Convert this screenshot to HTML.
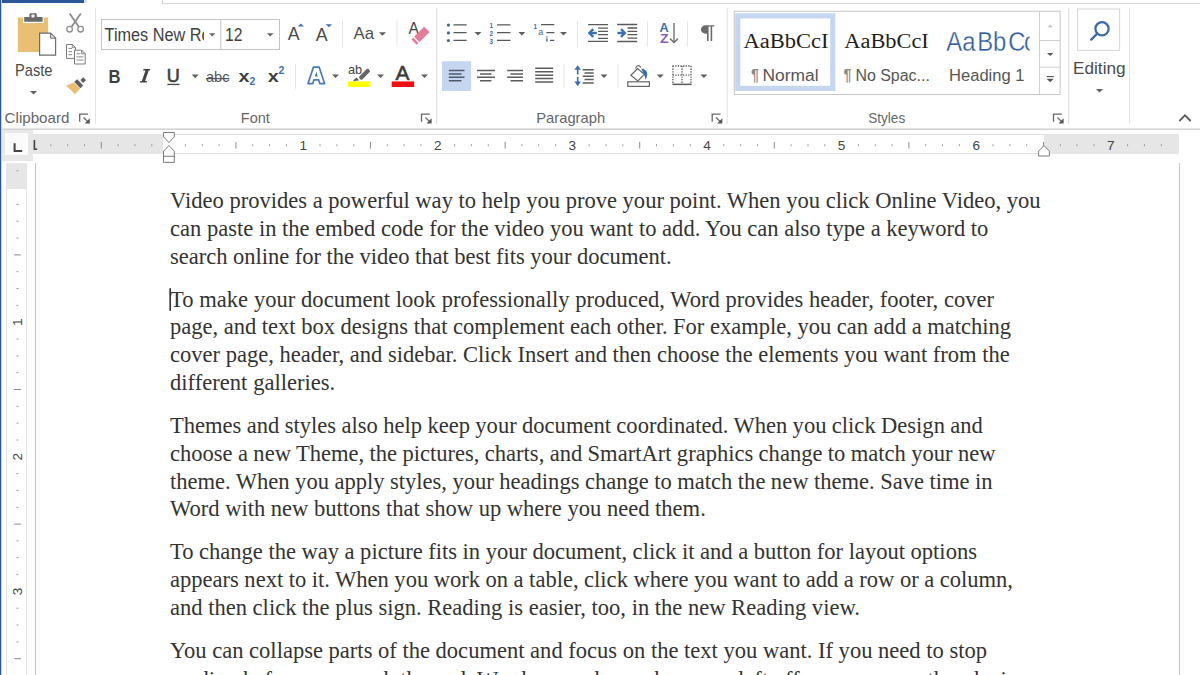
<!DOCTYPE html>
<html><head><meta charset="utf-8">
<style>
*{margin:0;padding:0;box-sizing:border-box}
html,body{width:1200px;height:675px;overflow:hidden;background:#fff}
body{position:relative;font-family:"Liberation Sans",sans-serif;color:#444}
.a{position:absolute}
.ln{position:absolute;left:170px;font-family:"Liberation Serif",serif;font-size:22.55px;color:#333;white-space:pre;line-height:1}
svg{position:absolute;left:0;top:0}
</style></head><body>
<!-- top tab strip remnants -->
<div class="a" style="left:0;top:0;width:84px;height:3px;background:#2b579a"></div>
<div class="a" style="left:84px;top:0;width:3px;height:3px;background:#dde3ea"></div>
<div class="a" style="left:162px;top:0;width:1px;height:4px;background:#d4d4d4"></div>
<div class="a" style="left:162px;top:3px;width:1038px;height:1px;background:#d4d4d4"></div>
<!-- ribbon bottom border -->
<div class="a" style="left:0;top:128px;width:1200px;height:1px;background:#e6e6e6"></div>
<div class="a" style="left:0;top:129px;width:1200px;height:1px;background:#d2d2d2"></div>
<!-- ruler -->
<div class="a" style="left:2px;top:130px;width:31px;height:31px;background:#e8e8e8"></div>
<div class="a" style="left:5px;top:133px;width:23px;height:22px;background:#fbfbfb"></div>
<div class="a" style="left:33px;top:134px;width:1146px;height:20px;background:#e6e6e6"></div>
<div class="a" style="left:163px;top:134px;width:881px;height:20px;background:#fff;border-top:1px solid #e0e0e0;border-bottom:1px solid #e0e0e0"></div>
<!-- vertical ruler -->
<div class="a" style="left:6px;top:163px;width:21px;height:512px;background:#fff;border-left:1px solid #e3e3e3;border-right:1px solid #e3e3e3"></div>
<div class="a" style="left:6px;top:163px;width:21px;height:26px;background:#e6e6e6"></div>
<!-- page edges -->
<div class="a" style="left:35px;top:163px;width:1px;height:512px;background:#c6c6c6"></div>
<div class="a" style="left:1179px;top:163px;width:1px;height:512px;background:#c6c6c6"></div>
<!-- left blue border -->
<div class="a" style="left:0;top:0;width:1px;height:675px;background:#2b579a"></div>
<div class="a" style="left:1px;top:0;width:1px;height:675px;background:#c5d2e6"></div>
<svg width="1200" height="130" viewBox="0 0 1200 130" style="font-family:'Liberation Sans',sans-serif">

<!-- group separators -->
<g fill="#e3e3e3">
 <rect x="95" y="8" width="1" height="116"/>
 <rect x="436" y="8" width="1.2" height="116"/>
 <rect x="726.5" y="8" width="1.2" height="116"/>
 <rect x="1068" y="8" width="1.2" height="116"/>
 <rect x="1129" y="8" width="1.2" height="116"/>
</g>
<!-- inner separators -->
<g fill="#e6e6e6">
 <rect x="295" y="64" width="1" height="25"/>
 <rect x="342" y="20" width="1" height="27"/>
 <rect x="396.5" y="20" width="1" height="27"/>
 <rect x="577" y="21" width="1" height="26"/>
 <rect x="647" y="21" width="1" height="26"/>
 <rect x="687" y="21" width="1" height="26"/>
 <rect x="563.5" y="64" width="1" height="24"/>
 <rect x="617.5" y="64" width="1" height="24"/>
</g>
<!-- group labels -->
<g fill="#666" font-size="14.2">
 <text x="4.6" y="122.5" textLength="64.8" lengthAdjust="spacingAndGlyphs">Clipboard</text>
 <text x="240.8" y="122.8" textLength="29" lengthAdjust="spacingAndGlyphs">Font</text>
 <text x="536.3" y="122.5" textLength="68.8" lengthAdjust="spacingAndGlyphs">Paragraph</text>
 <text x="868.2" y="122.8" textLength="37" lengthAdjust="spacingAndGlyphs">Styles</text>
</g>
<g transform="translate(79,113.5)"><path d="M0.7,8.2V0.6H9" fill="none" stroke="#666" stroke-width="1.3"/><path d="M4.6,4 L9,8.4" stroke="#666" stroke-width="1.3"/><path d="M10.8,4.8V9.9H5.7z" fill="#555"/></g>
<g transform="translate(420.8,113.5)"><path d="M0.7,8.2V0.6H9" fill="none" stroke="#666" stroke-width="1.3"/><path d="M4.6,4 L9,8.4" stroke="#666" stroke-width="1.3"/><path d="M10.8,4.8V9.9H5.7z" fill="#555"/></g>
<g transform="translate(711.5,113.5)"><path d="M0.7,8.2V0.6H9" fill="none" stroke="#666" stroke-width="1.3"/><path d="M4.6,4 L9,8.4" stroke="#666" stroke-width="1.3"/><path d="M10.8,4.8V9.9H5.7z" fill="#555"/></g>
<g transform="translate(1052.8,113.5)"><path d="M0.7,8.2V0.6H9" fill="none" stroke="#666" stroke-width="1.3"/><path d="M4.6,4 L9,8.4" stroke="#666" stroke-width="1.3"/><path d="M10.8,4.8V9.9H5.7z" fill="#555"/></g>

<!-- ===== Clipboard ===== -->
<rect x="17.8" y="17.5" width="30.3" height="34.5" fill="#e9bf73"/>
<rect x="23" y="16" width="20.6" height="7" fill="#fff"/>
<path d="M24.2,16.9H29.4V14.4Q29.4,13.2 30.6,13.2H35.6Q36.8,13.2 36.8,14.4V16.9H42.6V21.7H24.2z" fill="#6a6a6a"/>
<rect x="31.4" y="14.6" width="3.2" height="2.8" rx="0.6" fill="#f4f4f4"/>
<path d="M39.6,33.2H50.6L55.6,38.2V55.2H39.6z" fill="#fff" stroke="#6d6d6d" stroke-width="1.2"/>
<path d="M50.6,33.2V38.2H55.6Z" fill="#e6e6e6" stroke="#6d6d6d" stroke-width="1"/>
<text x="15" y="75.6" font-size="16.4" fill="#4a4a4a" textLength="37.5" lengthAdjust="spacingAndGlyphs">Paste</text>
<path transform="translate(30,91)" d="M0,0h7l-3.5,3.6z" fill="#5f5f5f"/>
<!-- scissors -->
<g stroke="#8c8c8c" fill="none">
 <path d="M69.6,13.4 L78.6,26.6" stroke-width="1.8"/>
 <path d="M80.8,13.4 L71.8,26.6" stroke-width="1.8"/>
 <circle cx="69.6" cy="29.2" r="2.8" stroke-width="1.3"/>
 <circle cx="80.6" cy="29.2" r="2.8" stroke-width="1.3"/>
</g>
<!-- copy -->
<g stroke="#7a7a7a" stroke-width="1" fill="#fff">
 <path d="M66.5,44.5H72.3L75.5,47.7V58.4H66.5z"/>
 <path d="M74.5,50.2H81.6L85.2,53.8V64H74.5z"/>
</g>
<g fill="#e8e8e8" stroke="#7a7a7a" stroke-width="0.8"><path d="M72.3,44.5V47.7H75.5Z"/><path d="M81.6,50.2V53.8H85.2Z"/></g>
<g stroke="#8a8a8a" stroke-width="1">
 <path d="M68.4,48.4h3.6 M68.4,51.6h3.6 M68.4,54.7h3.6"/>
 <path d="M76.6,53.8h4 M76.6,56.9h6.8 M76.6,60h6.8"/>
</g>
<!-- format painter -->
<path d="M66.2,85.6 L74,82.4 L80.2,88.6 L75,94.2 Z" fill="#e9bf73"/>
<path d="M74.2,81.8 L77.2,79.3 L83.2,85.5 L80.4,88.2 Z" fill="#5f5f5f"/>
<path d="M80.4,80 L83.4,77.3 L86,80.2 L83,82.9 Z" fill="#5f5f5f"/>

<!-- ===== Font ===== -->
<rect x="101.5" y="19.5" width="178" height="30" fill="#fff" stroke="#c3c3c3" stroke-width="1"/>
<rect x="220.3" y="19.5" width="1" height="30" fill="#c3c3c3"/>
<svg x="102" y="20" width="102" height="29" overflow="hidden"><text x="2.6" y="20.8" font-size="17.6" fill="#3f3f3f" textLength="106" lengthAdjust="spacingAndGlyphs">Times New Ro</text></svg>
<path d="M209,33.3h6.4l-3.2,3.2z" fill="#666"/>
<text x="225" y="40.8" font-size="17.6" fill="#3f3f3f" textLength="17.5" lengthAdjust="spacingAndGlyphs">12</text>
<path d="M266.8,33.3h6.8l-3.4,3.3z" fill="#666"/>
<!-- grow/shrink -->
<text x="287.8" y="39.8" font-size="17.8" fill="#4a4a4a">A</text>
<path d="M297.8,26.4L300.8,23.4L303.9,26.4z" fill="#3a6fb0"/>
<text x="315.8" y="40.7" font-size="17.8" fill="#4a4a4a">A</text>
<path d="M325.8,24.2H332L328.9,27.3z" fill="#3a6fb0"/>
<!-- change case -->
<text x="353.6" y="38.6" font-size="17" fill="#4e4e4e" textLength="20.5" lengthAdjust="spacingAndGlyphs">Aa</text>
<path transform="translate(379,32.2)" d="M0,0h7l-3.5,3.6z" fill="#5f5f5f"/>
<!-- clear formatting -->
<text x="408.6" y="34.4" font-size="15.6" fill="#444">A</text>
<g transform="translate(420.4,35.8) rotate(-45)">
 <rect x="-9" y="-3.8" width="18" height="7.6" rx="0.8" fill="#e57c99"/>
 <rect x="-6.4" y="-4" width="1.3" height="8" fill="#fff"/>
</g>
<!-- font row 2 -->
<text x="108.6" y="82.5" font-size="18.6" font-weight="bold" fill="#3e3e3e" textLength="12" lengthAdjust="spacingAndGlyphs">B</text>
<path d="M143.5,69H150.2L149.8,70.5H143.1Z M145.6,70.3H148.8L145,81.3H141.8Z M140.3,81H147L146.6,82.6H139.9Z" fill="#444"/>
<text x="166.8" y="82" font-size="17.6" fill="#404040" stroke="#404040" stroke-width="0.6" textLength="13" lengthAdjust="spacingAndGlyphs">U</text>
<rect x="167.4" y="83.8" width="12" height="1.3" fill="#444"/>
<path transform="translate(191.7,74.6)" d="M0,0h7l-3.5,3.6z" fill="#5f5f5f"/>
<text x="206" y="82.3" font-size="15" fill="#555" textLength="23.5" lengthAdjust="spacingAndGlyphs">abc</text>
<rect x="206" y="78" width="23.4" height="1.2" fill="#555"/>
<text x="238.5" y="82.3" font-size="15.6" font-weight="bold" fill="#3e3e3e" textLength="11" lengthAdjust="spacingAndGlyphs">x</text>
<text x="249.4" y="84.8" font-size="10" font-weight="bold" fill="#3a6fb0" textLength="5.8" lengthAdjust="spacingAndGlyphs">2</text>
<text x="267.8" y="82.3" font-size="15.6" font-weight="bold" fill="#3e3e3e" textLength="11" lengthAdjust="spacingAndGlyphs">x</text>
<text x="278.4" y="73.5" font-size="10" font-weight="bold" fill="#3a6fb0" textLength="5.8" lengthAdjust="spacingAndGlyphs">2</text>
<!-- text effects -->
<path d="M313.4,67.2H319.2L324.6,83.6H319.8L318.6,79.8H314L312.8,83.6H308Z" fill="#fff" stroke="#4a7ab8" stroke-width="1.7" stroke-linejoin="round"/>
<path d="M314.9,76.6 L316.3,71.4 L317.7,76.6Z" fill="#3a6fb0"/>
<path transform="translate(332,74.4)" d="M0,0h7l-3.5,3.6z" fill="#5f5f5f"/>
<!-- highlight -->
<text x="348" y="73.7" font-size="12.6" fill="#444" textLength="14.2" lengthAdjust="spacingAndGlyphs">ab</text>
<rect x="357.2" y="72" width="14.6" height="4.6" rx="1.8" transform="rotate(-45 364.5 74.3)" fill="#fff"/>
<rect x="358" y="72.1" width="13" height="4.2" rx="1.6" transform="rotate(-45 364.5 74.2)" fill="#666"/>
<path d="M352.8,81.2 L356.2,77.4 L359.2,80.2 Z" fill="#555"/>
<rect x="347.8" y="81.4" width="22.5" height="5.6" fill="#ffff00"/>
<path transform="translate(377,74.4)" d="M0,0h7l-3.5,3.6z" fill="#5f5f5f"/>
<!-- font color -->
<text x="395.6" y="79.8" font-size="19.6" fill="#3b3b3b" stroke="#3b3b3b" stroke-width="0.5" textLength="14" lengthAdjust="spacingAndGlyphs">A</text>
<rect x="391.7" y="81.4" width="22.5" height="5.6" fill="#ee1111"/>
<path transform="translate(421,74.4)" d="M0,0h7l-3.5,3.6z" fill="#5f5f5f"/>

<!-- ===== Paragraph row 1 ===== -->
<g fill="#41699f">
 <circle cx="448.4" cy="25.1" r="1.6"/><circle cx="448.4" cy="32.9" r="1.6"/><circle cx="448.4" cy="40.5" r="1.6"/>
</g>
<g stroke="#585858" stroke-width="1.4">
 <path d="M453.5,24.9H466.6 M453.5,32.6H466.6 M453.5,40.4H466.6"/>
 <path d="M497,24.9H510.5 M497,32.6H510.5 M497,40.4H510.5"/>
 <path d="M541.1,24.6H554.3 M546.4,32.6H554.3 M550,40.4H554.3"/>
</g>
<path transform="translate(474.5,32)" d="M0,0h7l-3.5,3.6z" fill="#5f5f5f"/>
<g fill="#41699f" font-size="6.4" font-weight="bold">
 <text x="489.6" y="28.4">1</text><text x="489.6" y="36">2</text><text x="489.6" y="43.6">3</text>
 <text x="533.6" y="28.6">1</text>
</g>
<text x="538.2" y="35.4" font-size="9" fill="#41699f">a</text>
<rect x="546.2" y="36.3" width="1.4" height="1.2" fill="#41699f"/><rect x="546.2" y="38.4" width="1.4" height="3.2" fill="#41699f"/>
<path transform="translate(518.4,32)" d="M0,0h7l-3.5,3.6z" fill="#5f5f5f"/>
<path transform="translate(560,32)" d="M0,0h7l-3.5,3.6z" fill="#5f5f5f"/>
<!-- decrease/increase indent -->
<g stroke="#5a5a5a" stroke-width="1.3">
 <path d="M588,24.6H608 M598.1,28.1H608 M598.1,31.4H608 M598.1,34.7H608 M598.1,38.3H608 M588,41.4H608"/>
 <path d="M617.2,24.5H637.2 M627.5,28H637.2 M627.5,31.3H637.2 M627.5,34.7H637.2 M627.5,38.2H637.2 M617.2,41.5H637.2"/>
</g>
<g stroke="#3a6fb0" stroke-width="2.4" fill="none" stroke-linecap="butt">
 <path d="M596.8,33H589.8"/><path d="M593.2,29.2 L589.4,33 L593.2,36.8"/>
 <path d="M617.4,33H624.6"/><path d="M621,29.2 L624.8,33 L621,36.8"/>
</g>
<!-- sort -->
<text x="659.6" y="32" font-size="12" font-weight="bold" fill="#3a6fb0" textLength="9.2" lengthAdjust="spacingAndGlyphs">A</text>
<text x="660" y="42.6" font-size="12" font-weight="bold" fill="#8a5cb8" textLength="8.6" lengthAdjust="spacingAndGlyphs">Z</text>
<g stroke="#666" stroke-width="1.3" fill="none">
 <path d="M674,23V42.5"/><path d="M670,38.5 L674,42.6 L678,38.5"/>
</g>
<!-- pilcrow -->
<path d="M705.5,25.2H714.2V26.6H712.2V41H710.6V26.6H708.6V41H707V33.8C703,33.8 701,32 701,29.5C701,26.8 703,25.2 705.5,25.2Z" fill="#6a6a6a"/>
<!-- ===== Paragraph row 2 ===== -->
<rect x="442" y="61.2" width="29.2" height="29.8" fill="#c5d7f0"/>
<g stroke="#4f5a69" stroke-width="1.5">
 <path d="M448.8,70.5H464.5 M448.8,74H461.5 M448.8,77.3H464.5 M448.8,80.8H461.5"/>
</g>
<g stroke="#5c5c5c" stroke-width="1.5">
 <path d="M477,70.5H495 M480,74H491.5 M477,77.3H495 M480,80.8H491.5"/>
 <path d="M507.2,70.5H523 M510.5,74H523 M507.2,77.3H523 M510.5,80.8H523"/>
 <path d="M535.2,68.3H553.2 M535.2,71.7H553.2 M535.2,75.2H553.2 M535.2,78.5H553.2 M535.2,82H553.2"/>
 <path d="M582.7,69.7H593.7 M584.5,73H593.7 M582.7,76.3H593.7 M584.5,79.6H593.7 M582.7,83H593.7"/>
</g>
<!-- line spacing arrows -->
<g fill="#3a6fb0">
 <path d="M577.7,65.2 L581,69.8 H578.5V74.6H576.9V69.8H574.4z"/>
 <path d="M577.7,86.2 L581,81.6 H578.5V76.8H576.9V81.6H574.4z"/>
</g>
<path transform="translate(600.5,74.4)" d="M0,0h7l-3.5,3.6z" fill="#5f5f5f"/>
<!-- shading -->
<g fill="none" stroke="#666" stroke-width="1.2">
 <path d="M630.9,75.2 L637.6,68.6 L644.3,74.4 L637.8,80.9 Z" fill="#fff"/>
 <path d="M635.9,68.6 A2.4,2.4 0 1 1 640.6,67.6"/>
 <rect x="627.8" y="81.8" width="21.6" height="4.6" fill="#fff"/>
</g>
<path d="M641.2,68.4 C644.2,68.6 647.6,70.6 647.2,74.4 C647,76.6 646.4,78.2 645.4,79.8 C645.2,77.4 644.8,75.2 643.6,73.4 C642.8,72 642,70.6 641.2,68.4 Z" fill="#3a6fb0"/>
<path transform="translate(656.7,74.4)" d="M0,0h7l-3.5,3.6z" fill="#5f5f5f"/>
<!-- borders -->
<g stroke="#555" stroke-width="1.3" stroke-dasharray="1.3,1.3" fill="none">
 <path d="M672.6,66H691.3 M672.6,75.2H691.3 M672.9,66V84 M682,66V84 M691,66V84"/>
</g>
<rect x="672.4" y="83.6" width="19.2" height="1.5" fill="#5a5a5a"/>
<path transform="translate(700.4,74.4)" d="M0,0h7l-3.5,3.6z" fill="#5f5f5f"/>

<!-- ===== Styles ===== -->
<rect x="734.3" y="11.3" width="325.8" height="83.2" fill="#fff" stroke="#c6c6c6" stroke-width="1"/>
<rect x="737.8" y="15.8" width="95" height="72.6" fill="none" stroke="#c5d7f0" stroke-width="5.2"/>
<text x="743.5" y="47.7" font-family="Liberation Serif" font-size="21.6" fill="#1e1e1e" textLength="85" lengthAdjust="spacingAndGlyphs">AaBbCcI</text>
<text x="844.3" y="47.6" font-family="Liberation Serif" font-size="21.6" fill="#1e1e1e" textLength="84.5" lengthAdjust="spacingAndGlyphs">AaBbCcI</text>
<svg x="940" y="20" width="89.5" height="40" overflow="hidden"><g transform="translate(6.25,30.7) scale(0.87,1)"><text x="0 18.45 35.7 53.7 71.35 89.35" y="0" font-size="27.4" fill="#2f5d9e" stroke="#fff" stroke-width="0.3">AaBbCc</text></g></svg>
<g font-size="16" fill="#555">
 <text x="751" y="80.8" fill="#8c8c8c" font-weight="bold" textLength="8" lengthAdjust="spacingAndGlyphs">¶</text>
 <text x="762.5" y="80.8" textLength="56" lengthAdjust="spacingAndGlyphs">Normal</text>
 <text x="843.6" y="81" fill="#8c8c8c" font-weight="bold" textLength="8" lengthAdjust="spacingAndGlyphs">¶</text>
 <text x="855.4" y="81" textLength="74.5" lengthAdjust="spacingAndGlyphs">No Spac...</text>
 <text x="949" y="80.8" textLength="75.5" lengthAdjust="spacingAndGlyphs">Heading 1</text>
</g>
<!-- gallery scroll -->
<g fill="none" stroke="#d0d0d0" stroke-width="1">
 <path d="M1039.5,11.3V94.5 M1039.5,40.5H1060 M1039.5,67.2H1060"/>
</g>
<path d="M1047.2,27.2h6l-3,-2.6z" fill="#c8c8c8"/>
<path d="M1047,53h6.4l-3.2,3z" fill="#555"/>
<rect x="1046.6" y="76" width="7.2" height="1.1" fill="#555"/>
<path d="M1046.6,78.8h7.2l-3.6,3.4z" fill="#555"/>

<!-- ===== Editing ===== -->
<rect x="1077.6" y="9" width="42" height="41.4" fill="#fff" stroke="#d6d6d6" stroke-width="1"/>
<g stroke="#3d6aa6" stroke-width="2.3" fill="none">
 <circle cx="1102" cy="28.8" r="6.6"/>
 <path d="M1097.2,33.6 L1091.2,39.6" stroke-linecap="round"/>
</g>
<text x="1073" y="73.6" font-size="16.6" fill="#4a4a4a" textLength="52.6" lengthAdjust="spacingAndGlyphs">Editing</text>
<path transform="translate(1096,89)" d="M0,0h7l-3.5,3.6z" fill="#5f5f5f"/>
<!-- collapse caret -->
<path d="M1179.4,121 L1185,115.2 L1190.6,121" fill="none" stroke="#555" stroke-width="1.8"/>
</svg>
<svg width="1200" height="675" viewBox="0 0 1200 675" style="font-family:'Liberation Sans',sans-serif">
<rect x="50.3" y="144.2" width="1" height="2" fill="#9a9a9a"/>
<rect x="67.2" y="144.2" width="1" height="2" fill="#9a9a9a"/>
<rect x="84.0" y="144.2" width="1" height="2" fill="#9a9a9a"/>
<rect x="100.8" y="142" width="1" height="6.5" fill="#8c8c8c"/>
<rect x="117.6" y="144.2" width="1" height="2" fill="#9a9a9a"/>
<rect x="134.4" y="144.2" width="1" height="2" fill="#9a9a9a"/>
<rect x="151.3" y="144.2" width="1" height="2" fill="#9a9a9a"/>
<rect x="184.9" y="144.2" width="1" height="2" fill="#9a9a9a"/>
<rect x="201.8" y="144.2" width="1" height="2" fill="#9a9a9a"/>
<rect x="218.6" y="144.2" width="1" height="2" fill="#9a9a9a"/>
<rect x="235.4" y="142" width="1" height="6.5" fill="#8c8c8c"/>
<rect x="252.2" y="144.2" width="1" height="2" fill="#9a9a9a"/>
<rect x="269.0" y="144.2" width="1" height="2" fill="#9a9a9a"/>
<rect x="285.9" y="144.2" width="1" height="2" fill="#9a9a9a"/>
<text x="303.2" y="149.6" font-size="13.6" fill="#444" text-anchor="middle">1</text>
<rect x="319.5" y="144.2" width="1" height="2" fill="#9a9a9a"/>
<rect x="336.4" y="144.2" width="1" height="2" fill="#9a9a9a"/>
<rect x="353.2" y="144.2" width="1" height="2" fill="#9a9a9a"/>
<rect x="370.0" y="142" width="1" height="6.5" fill="#8c8c8c"/>
<rect x="386.8" y="144.2" width="1" height="2" fill="#9a9a9a"/>
<rect x="403.6" y="144.2" width="1" height="2" fill="#9a9a9a"/>
<rect x="420.5" y="144.2" width="1" height="2" fill="#9a9a9a"/>
<text x="437.8" y="149.6" font-size="13.6" fill="#444" text-anchor="middle">2</text>
<rect x="454.1" y="144.2" width="1" height="2" fill="#9a9a9a"/>
<rect x="470.9" y="144.2" width="1" height="2" fill="#9a9a9a"/>
<rect x="487.8" y="144.2" width="1" height="2" fill="#9a9a9a"/>
<rect x="504.6" y="142" width="1" height="6.5" fill="#8c8c8c"/>
<rect x="521.4" y="144.2" width="1" height="2" fill="#9a9a9a"/>
<rect x="538.2" y="144.2" width="1" height="2" fill="#9a9a9a"/>
<rect x="555.1" y="144.2" width="1" height="2" fill="#9a9a9a"/>
<text x="572.4" y="149.6" font-size="13.6" fill="#444" text-anchor="middle">3</text>
<rect x="588.7" y="144.2" width="1" height="2" fill="#9a9a9a"/>
<rect x="605.5" y="144.2" width="1" height="2" fill="#9a9a9a"/>
<rect x="622.4" y="144.2" width="1" height="2" fill="#9a9a9a"/>
<rect x="639.2" y="142" width="1" height="6.5" fill="#8c8c8c"/>
<rect x="656.0" y="144.2" width="1" height="2" fill="#9a9a9a"/>
<rect x="672.9" y="144.2" width="1" height="2" fill="#9a9a9a"/>
<rect x="689.7" y="144.2" width="1" height="2" fill="#9a9a9a"/>
<text x="707.0" y="149.6" font-size="13.6" fill="#444" text-anchor="middle">4</text>
<rect x="723.3" y="144.2" width="1" height="2" fill="#9a9a9a"/>
<rect x="740.1" y="144.2" width="1" height="2" fill="#9a9a9a"/>
<rect x="757.0" y="144.2" width="1" height="2" fill="#9a9a9a"/>
<rect x="773.8" y="142" width="1" height="6.5" fill="#8c8c8c"/>
<rect x="790.6" y="144.2" width="1" height="2" fill="#9a9a9a"/>
<rect x="807.5" y="144.2" width="1" height="2" fill="#9a9a9a"/>
<rect x="824.3" y="144.2" width="1" height="2" fill="#9a9a9a"/>
<text x="841.6" y="149.6" font-size="13.6" fill="#444" text-anchor="middle">5</text>
<rect x="857.9" y="144.2" width="1" height="2" fill="#9a9a9a"/>
<rect x="874.8" y="144.2" width="1" height="2" fill="#9a9a9a"/>
<rect x="891.6" y="144.2" width="1" height="2" fill="#9a9a9a"/>
<rect x="908.4" y="142" width="1" height="6.5" fill="#8c8c8c"/>
<rect x="925.2" y="144.2" width="1" height="2" fill="#9a9a9a"/>
<rect x="942.0" y="144.2" width="1" height="2" fill="#9a9a9a"/>
<rect x="958.9" y="144.2" width="1" height="2" fill="#9a9a9a"/>
<text x="976.2" y="149.6" font-size="13.6" fill="#444" text-anchor="middle">6</text>
<rect x="992.5" y="144.2" width="1" height="2" fill="#9a9a9a"/>
<rect x="1009.4" y="144.2" width="1" height="2" fill="#9a9a9a"/>
<rect x="1026.2" y="144.2" width="1" height="2" fill="#9a9a9a"/>
<rect x="1043.0" y="142" width="1" height="6.5" fill="#8c8c8c"/>
<rect x="1059.8" y="144.2" width="1" height="2" fill="#9a9a9a"/>
<rect x="1076.6" y="144.2" width="1" height="2" fill="#9a9a9a"/>
<rect x="1093.5" y="144.2" width="1" height="2" fill="#9a9a9a"/>
<text x="1110.8" y="149.6" font-size="13.6" fill="#444" text-anchor="middle">7</text>
<rect x="1127.1" y="144.2" width="1" height="2" fill="#9a9a9a"/>
<rect x="1143.9" y="144.2" width="1" height="2" fill="#9a9a9a"/>
<rect x="1160.8" y="144.2" width="1" height="2" fill="#9a9a9a"/>
<path d="M34.4,140V149.2H37.2" fill="none" stroke="#444" stroke-width="1.6"/>
<path d="M14.6,143.2V150.9H22.2" fill="none" stroke="#444" stroke-width="2"/>
<g fill="#fff" stroke="#7a7a7a" stroke-width="1">
<path d="M163.5,132.5H174.3V136.8L168.9,142.6L163.5,136.8Z"/>
<path d="M168.9,145.5L174.3,151.2V162.4H163.5V151.2Z"/>
<path d="M163.5,156.3H174.3"/>
<path d="M1044,145.5L1049.4,151.2V156H1038.6V151.2Z"/>
</g>
<rect x="16.5" y="170.3" width="2" height="1" fill="#9a9a9a"/>
<rect x="16.5" y="203.9" width="2" height="1" fill="#9a9a9a"/>
<rect x="16.5" y="220.8" width="2" height="1" fill="#9a9a9a"/>
<rect x="16.5" y="237.6" width="2" height="1" fill="#9a9a9a"/>
<rect x="14" y="254.4" width="7" height="1" fill="#8c8c8c"/>
<rect x="16.5" y="271.2" width="2" height="1" fill="#9a9a9a"/>
<rect x="16.5" y="288.0" width="2" height="1" fill="#9a9a9a"/>
<rect x="16.5" y="304.9" width="2" height="1" fill="#9a9a9a"/>
<text x="0" y="0" font-size="13.6" fill="#444" text-anchor="middle" transform="translate(22.3,322.2) rotate(-90)">1</text>
<rect x="16.5" y="338.5" width="2" height="1" fill="#9a9a9a"/>
<rect x="16.5" y="355.4" width="2" height="1" fill="#9a9a9a"/>
<rect x="16.5" y="372.2" width="2" height="1" fill="#9a9a9a"/>
<rect x="14" y="389.0" width="7" height="1" fill="#8c8c8c"/>
<rect x="16.5" y="405.8" width="2" height="1" fill="#9a9a9a"/>
<rect x="16.5" y="422.6" width="2" height="1" fill="#9a9a9a"/>
<rect x="16.5" y="439.5" width="2" height="1" fill="#9a9a9a"/>
<text x="0" y="0" font-size="13.6" fill="#444" text-anchor="middle" transform="translate(22.3,456.8) rotate(-90)">2</text>
<rect x="16.5" y="473.1" width="2" height="1" fill="#9a9a9a"/>
<rect x="16.5" y="489.9" width="2" height="1" fill="#9a9a9a"/>
<rect x="16.5" y="506.8" width="2" height="1" fill="#9a9a9a"/>
<rect x="14" y="523.6" width="7" height="1" fill="#8c8c8c"/>
<rect x="16.5" y="540.4" width="2" height="1" fill="#9a9a9a"/>
<rect x="16.5" y="557.2" width="2" height="1" fill="#9a9a9a"/>
<rect x="16.5" y="574.1" width="2" height="1" fill="#9a9a9a"/>
<text x="0" y="0" font-size="13.6" fill="#444" text-anchor="middle" transform="translate(22.3,591.4) rotate(-90)">3</text>
<rect x="16.5" y="607.7" width="2" height="1" fill="#9a9a9a"/>
<rect x="16.5" y="624.5" width="2" height="1" fill="#9a9a9a"/>
<rect x="16.5" y="641.4" width="2" height="1" fill="#9a9a9a"/>
<rect x="14" y="658.2" width="7" height="1" fill="#8c8c8c"/>
<rect x="169.4" y="288.2" width="1.6" height="22.6" fill="#333"/>
</svg>
<div class="ln" style="top:189.9px">Video provides a powerful way to help you prove your point. When you click Online Video, you</div>
<div class="ln" style="top:217.7px">can paste in the embed code for the video you want to add. You can also type a keyword to</div>
<div class="ln" style="top:245.5px;word-spacing:-0.200px">search online for the video that best fits your document.</div>
<div class="ln" style="top:288.5px;word-spacing:0.182px">To make your document look professionally produced, Word provides header, footer, cover</div>
<div class="ln" style="top:316.3px;word-spacing:-0.107px">page, and text box designs that complement each other. For example, you can add a matching</div>
<div class="ln" style="top:344.1px;word-spacing:-0.053px">cover page, header, and sidebar. Click Insert and then choose the elements you want from the</div>
<div class="ln" style="top:371.9px;word-spacing:0.300px">different galleries.</div>
<div class="ln" style="top:414.9px;word-spacing:-0.246px">Themes and styles also help keep your document coordinated. When you click Design and</div>
<div class="ln" style="top:442.7px;word-spacing:-0.264px">choose a new Theme, the pictures, charts, and SmartArt graphics change to match your new</div>
<div class="ln" style="top:470.5px;word-spacing:-0.153px">theme. When you apply styles, your headings change to match the new theme. Save time in</div>
<div class="ln" style="top:498.3px;word-spacing:-0.030px">Word with new buttons that show up where you need them.</div>
<div class="ln" style="top:541.3px;word-spacing:-0.100px">To change the way a picture fits in your document, click it and a button for layout options</div>
<div class="ln" style="top:569.1px;word-spacing:-0.125px">appears next to it. When you work on a table, click where you want to add a row or a column,</div>
<div class="ln" style="top:596.9px;word-spacing:-0.021px">and then click the plus sign. Reading is easier, too, in the new Reading view.</div>
<div class="ln" style="top:639.9px;word-spacing:-0.022px">You can collapse parts of the document and focus on the text you want. If you need to stop</div>
<div class="ln" style="top:669.0px">reading before you reach the end, Word remembers where you left off - even on another device.</div>
</body></html>
